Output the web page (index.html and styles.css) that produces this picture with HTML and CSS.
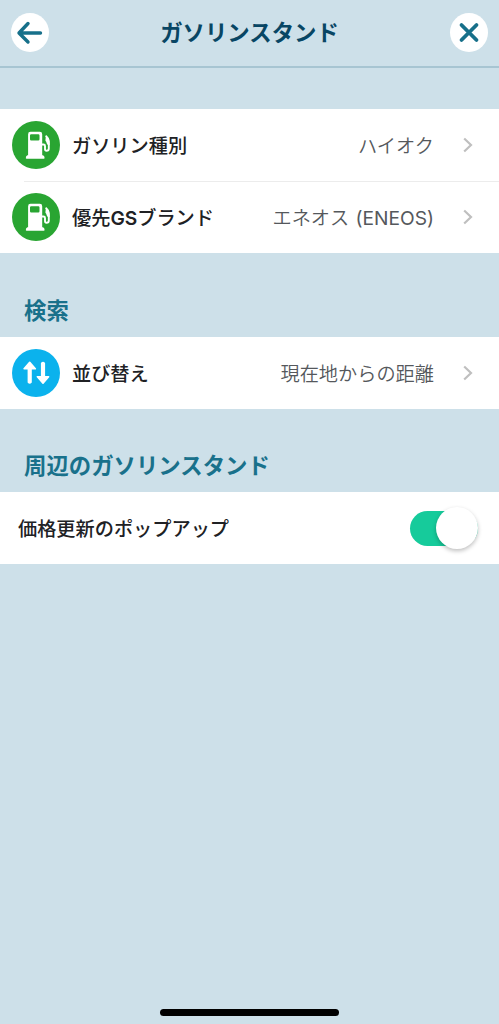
FILE: index.html
```html
<!DOCTYPE html>
<html lang="ja">
<head>
<meta charset="utf-8">
<title>ガソリンスタンド</title>
<link rel="stylesheet" href="styles.css">
</head>
<body>
<svg class="defs" width="0" height="0" aria-hidden="true">
  <symbol id="pump" viewBox="0 0 48 48">
    <path fill="#fff" fill-rule="evenodd" d="M18.500 10.800H27.800Q30.200 10.800 30.200 13.200V34.200H31Q32.600 34.800 32.600 37Q32.600 37.800 31.800 37.800H14.600Q13.800 37.800 13.800 37Q13.800 34.800 15.400 34.200H16.100V13.200Q16.100 10.800 18.500 10.800ZM19.200 13.300Q18 13.300 18 14.500V18.200Q18 19.400 19.200 19.400H26.300Q27.500 19.400 27.500 18.200V14.500Q27.500 13.300 26.300 13.300Z"/>
    <path fill="none" stroke="#fff" stroke-width="1.900" stroke-linecap="round" stroke-linejoin="round" d="M30.300 23.500H31.500Q33 23.500 33 25V28Q33 29.800 34.600 29.800Q36.800 29.800 36.800 27.500V20.500Q36.800 17.500 34.200 15.300"/>
    <path fill="#fff" d="M34 14.600L37.200 18.500L37.700 24H35.800Q34.500 22.500 34.200 20.800Q33 20 33.500 18.200Z"/>
  </symbol>
  <symbol id="chevron" viewBox="0 0 10 16">
    <path fill="none" stroke="#bfbfbf" stroke-width="2.200" d="M1.200 1.500L8 8L1.200 14.500"/>
  </symbol>
</svg>
<div class="screen">
  <header class="header">
    <button class="round" aria-label="戻る">
      <svg width="38" height="38" viewBox="0 0 38 38"><path class="stroke" d="M29.500 20H8M17 10.500L8 20L17 29"/></svg>
    </button>
    <h1 class="title">ガソリンスタンド</h1>
    <button class="round" aria-label="閉じる">
      <svg width="38" height="38" viewBox="0 0 38 38"><path class="stroke close" d="M11.500 12L26.500 27M26.500 12L11.500 27"/></svg>
    </button>
  </header>
  <main>
    <section class="list first">
      <div class="row">
        <span class="badge green"><svg width="48" height="48"><use href="#pump"/></svg></span>
        <span class="label">ガソリン種別</span>
        <span class="value">ハイオク</span>
        <svg class="chevron" width="10" height="16"><use href="#chevron"/></svg>
      </div>
      <div class="row divided">
        <span class="badge green"><svg width="48" height="48"><use href="#pump"/></svg></span>
        <span class="label">優先<span class="latin">GS</span>ブランド</span>
        <span class="value">エネオス <span class="latin">(ENEOS)</span></span>
        <svg class="chevron" width="10" height="16"><use href="#chevron"/></svg>
      </div>
    </section>
    <h2 class="heading">検索</h2>
    <section class="list">
      <div class="row">
        <span class="badge blue"><svg width="48" height="48" viewBox="0 0 48 48"><path fill="#fff" stroke="#fff" stroke-width="1.600" stroke-linejoin="round" d="M17.700 13.300L23.300 19.800H19V33.300Q17.700 34.800 16.400 33.300V19.800H12.100ZM31 34.200L25.400 27.700H29.700V14.200Q31 12.700 32.300 14.200V27.700H36.600Z"/></svg></span>
        <span class="label">並び替え</span>
        <span class="value">現在地からの距離</span>
        <svg class="chevron" width="10" height="16"><use href="#chevron"/></svg>
      </div>
    </section>
    <h2 class="heading nearby">周辺のガソリンスタンド</h2>
    <section class="list">
      <div class="row plain">
        <span class="label">価格更新のポップアップ</span>
        <span class="toggle" role="switch" aria-checked="true"><span class="knob"></span></span>
      </div>
    </section>
  </main>
  <footer class="home"><span class="bar"></span></footer>
</div>
</body>
</html>
```
FILE: styles.css
```css
* { box-sizing: border-box; }
body {
  margin: 0;
  background: #cde0e9;
  font-family: "Noto Sans CJK JP", sans-serif;
}
.defs { display: block; }
.screen { display: flex; flex-direction: column; height: 1024px; }
main { flex: 1; }
.header {
  display: flex;
  align-items: center;
  justify-content: space-between;
  height: 68px;
  padding: 0 11px 2px;
  border-bottom: 2px solid #a7c5d2;
}
.round {
  display: flex;
  width: 38px;
  height: 39px;
  padding: 0;
  border: 0;
  border-radius: 50%;
  background: #fff;
}
.stroke { fill: none; stroke: #17708a; stroke-width: 3.4; stroke-linecap: round; stroke-linejoin: round; }
.close { stroke-width: 3.8; }
.title { margin: 0; padding-bottom: 2px; font-size: 22.4px; line-height: 32px; font-weight: 700; color: #084664; }
.list { background: #fff; }
.first { margin-top: 41px; }
.row {
  display: flex;
  align-items: center;
  height: 72px;
  padding: 0 26px 0 12px;
}
.divided {
  background: linear-gradient(#ececec, #ececec) 24px 0 / 100% 1px no-repeat;
}
.badge { width: 48px; height: 48px; margin-right: 12px; border-radius: 50%; }
.badge svg { display: block; }
.green { background: #29a532; }
.blue { background: #0bb2ed; }
.label { font-size: 19.2px; line-height: 28px; font-weight: 500; color: #202124; white-space: nowrap; }
.label .latin { font-family: Inter, sans-serif; font-weight: 600; }
.value { margin-left: auto; font-size: 19.2px; line-height: 28px; font-weight: 350; color: #55585c; white-space: nowrap; }
.value .latin { font-family: Inter, sans-serif; font-weight: 400; margin-left: 2px; }
.chevron { margin-left: 29px; }
.heading {
  display: flex;
  align-items: flex-end;
  height: 84px;
  margin: 0;
  padding: 0 0 12px 24px;
  font-size: 22.4px;
  line-height: 32px;
  font-weight: 700;
  color: #19718b;
}
.nearby { height: 83px; }
.plain { padding: 0 21px 0 18px; }
.toggle {
  display: flex;
  align-items: center;
  justify-content: flex-end;
  width: 68px;
  height: 35px;
  margin-left: auto;
  border-radius: 18px;
  background: #16cb9b;
}
.knob { width: 42px; height: 42px; border-radius: 50%; background: #fff; box-shadow: 0 2px 4px rgba(0, 0, 0, .25); }
.home { display: flex; justify-content: center; height: 15px; }
.bar { width: 179px; height: 7px; border-radius: 4px; background: #000; }
```
